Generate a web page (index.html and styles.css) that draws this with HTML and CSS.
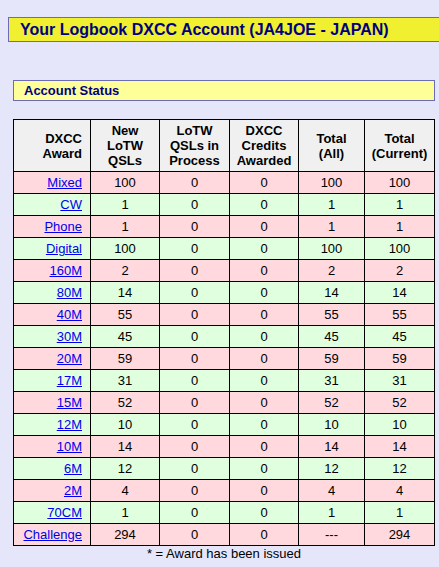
FILE: index.html
```html
<!DOCTYPE html>
<html>
<head>
<meta charset="utf-8">
<link rel="stylesheet" href="styles.css">
</head>
<body>
<div class="title">Your Logbook DXCC Account (JA4JOE - JAPAN)</div>
<div class="section">Account Status</div>
<table class="status">
  <colgroup>
    <col class="c1"><col class="c2"><col class="c3"><col class="c4"><col class="c5"><col class="c6">
  </colgroup>
  <thead>
    <tr>
      <th class="award">DXCC<br>Award</th>
      <th>New<br>LoTW<br>QSLs</th>
      <th>LoTW<br>QSLs in<br>Process</th>
      <th>DXCC<br>Credits<br>Awarded</th>
      <th>Total<br>(All)</th>
      <th>Total<br>(Current)</th>
    </tr>
  </thead>
  <tbody>
    <tr class="pink"><td class="award"><a href="#">Mixed</a></td><td>100</td><td>0</td><td>0</td><td>100</td><td>100</td></tr>
    <tr class="green"><td class="award"><a href="#">CW</a></td><td>1</td><td>0</td><td>0</td><td>1</td><td>1</td></tr>
    <tr class="pink"><td class="award"><a href="#">Phone</a></td><td>1</td><td>0</td><td>0</td><td>1</td><td>1</td></tr>
    <tr class="green"><td class="award"><a href="#">Digital</a></td><td>100</td><td>0</td><td>0</td><td>100</td><td>100</td></tr>
    <tr class="pink"><td class="award"><a href="#">160M</a></td><td>2</td><td>0</td><td>0</td><td>2</td><td>2</td></tr>
    <tr class="green"><td class="award"><a href="#">80M</a></td><td>14</td><td>0</td><td>0</td><td>14</td><td>14</td></tr>
    <tr class="pink"><td class="award"><a href="#">40M</a></td><td>55</td><td>0</td><td>0</td><td>55</td><td>55</td></tr>
    <tr class="green"><td class="award"><a href="#">30M</a></td><td>45</td><td>0</td><td>0</td><td>45</td><td>45</td></tr>
    <tr class="pink"><td class="award"><a href="#">20M</a></td><td>59</td><td>0</td><td>0</td><td>59</td><td>59</td></tr>
    <tr class="green"><td class="award"><a href="#">17M</a></td><td>31</td><td>0</td><td>0</td><td>31</td><td>31</td></tr>
    <tr class="pink"><td class="award"><a href="#">15M</a></td><td>52</td><td>0</td><td>0</td><td>52</td><td>52</td></tr>
    <tr class="green"><td class="award"><a href="#">12M</a></td><td>10</td><td>0</td><td>0</td><td>10</td><td>10</td></tr>
    <tr class="pink"><td class="award"><a href="#">10M</a></td><td>14</td><td>0</td><td>0</td><td>14</td><td>14</td></tr>
    <tr class="green"><td class="award"><a href="#">6M</a></td><td>12</td><td>0</td><td>0</td><td>12</td><td>12</td></tr>
    <tr class="pink"><td class="award"><a href="#">2M</a></td><td>4</td><td>0</td><td>0</td><td>4</td><td>4</td></tr>
    <tr class="green"><td class="award"><a href="#">70CM</a></td><td>1</td><td>0</td><td>0</td><td>1</td><td>1</td></tr>
    <tr class="pink"><td class="award"><a href="#">Challenge</a></td><td>294</td><td>0</td><td>0</td><td>---</td><td>294</td></tr>
  </tbody>
</table>
<div class="note">* = Award has been issued</div>
</body>
</html>
```

FILE: styles.css
```css
html {
  background: #e6e6fa;
}
body {
  margin: 0;
  padding: 17px 0 0 8px;
  font-family: "Liberation Sans", Arial, sans-serif;
  color: #000;
}
.title {
  width: 431px;
  box-sizing: border-box;
  border: 1px solid #6b6bb8;
  border-right: none;
  background: #f0f030;
  color: #000080;
  font-weight: bold;
  font-size: 16px;
  line-height: 23px;
  padding-left: 11px;
  white-space: nowrap;
}
.section {
  margin: 38px 0 0 5px;
  width: 422px;
  box-sizing: border-box;
  border: 1px solid #6b6bb8;
  background: #ffff99;
  color: #000080;
  font-weight: bold;
  font-size: 13px;
  line-height: 19px;
  padding-left: 10px;
}
.status {
  margin: 18px 0 0 5px;
  width: 422px;
  border-collapse: collapse;
  table-layout: fixed;
  font-size: 13px;
}
.c1 { width: 77px; }
.c2 { width: 69px; }
.c3 { width: 70px; }
.c4 { width: 69px; }
.c5 { width: 66px; }
.c6 { width: 70px; }
.status th,
.status td {
  border: 1px solid #000;
  text-align: center;
  padding: 0;
}
.status th {
  background: #f0f0f0;
  font-weight: bold;
  line-height: 15px;
  height: 51px;
}
.status td {
  height: 21px;
  line-height: 15px;
}
.status .award {
  text-align: right;
  padding-right: 8px;
}
.status a {
  color: #0000ee;
}
.pink td { background: #ffd9de; }
.green td { background: #dfffdf; }
.note {
  margin-left: 5px;
  width: 422px;
  text-align: center;
  font-size: 13px;
  line-height: 16px;
}
```
